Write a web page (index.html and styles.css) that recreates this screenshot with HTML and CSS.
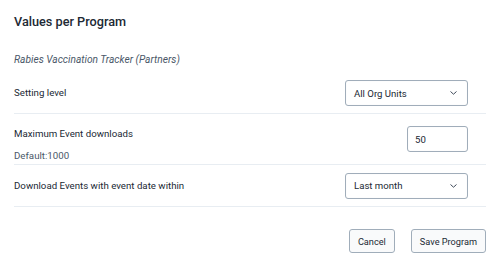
FILE: index.html
```html
<!DOCTYPE html>
<html lang="en">
<head>
    <meta charset="UTF-8">
    <meta name="viewport" content="width=device-width, initial-scale=1.0">
    <title>Values per Program</title>
    <link rel="stylesheet" href="styles.css">
</head>
<body>
    <div class="dialog">
        <h2 class="dialog-title">Values per Program</h2>
        <p class="program-name">Rabies Vaccination Tracker (Partners)</p>

        <div class="setting-row first">
            <div class="setting-label">Setting level</div>
            <div class="select wide">
                <span>All Org Units</span>
                <svg class="chevron" width="7" height="4" viewBox="0 0 7 4"><path d="M0.5 0.5 L3.5 3.2 L6.5 0.5" fill="none" stroke="#404b5a" stroke-width="1"/></svg>
            </div>
        </div>

        <div class="setting-row tall">
            <div class="setting-label with-help">
                Maximum Event downloads
                <div class="setting-help">Default:1000</div>
            </div>
            <div class="input narrow">50</div>
        </div>

        <div class="setting-row">
            <div class="setting-label">Download Events with event date within</div>
            <div class="select wide">
                <span>Last month</span>
                <svg class="chevron" width="7" height="4" viewBox="0 0 7 4"><path d="M0.5 0.5 L3.5 3.2 L6.5 0.5" fill="none" stroke="#404b5a" stroke-width="1"/></svg>
            </div>
        </div>

        <div class="buttons">
            <button type="button">Cancel</button>
            <button type="button">Save Program</button>
        </div>
    </div>
</body>
</html>
```

FILE: styles.css
```css
body {
    margin: 0;
    font-family: Roboto, "Liberation Sans", sans-serif;
    color: #212934;
    background: #fff;
}
.dialog {
    padding: 14px 14px 0 14px;
}
.dialog-title {
    font-size: 12.7px;
    font-weight: 500;
    margin: 0;
    line-height: 16px;
}
.program-name {
    font-size: 10.2px;
    font-style: italic;
    color: #4a5768;
    margin: 23px 0 6px 0;
    line-height: 14px;
}
.setting-row {
    display: flex;
    justify-content: space-between;
    align-items: center;
    min-height: 41px;
    padding-right: 18px;
    border-bottom: 1px solid #e8edf2;
    font-size: 9.7px;
}
.setting-row.first {
    min-height: 40px;
}
.setting-row.tall {
    min-height: 50px;
}
.setting-label {
    line-height: 14px;
}
.setting-label.with-help {
    padding-top: 11px;
}
.setting-help {
    color: #4a5768;
    margin-top: 8px;
}
.select, .input {
    box-sizing: border-box;
    height: 26px;
    border: 1px solid #a0adba;
    border-radius: 3px;
    box-shadow: inset 0 0 1px rgba(48, 54, 60, 0.1);
    display: flex;
    align-items: center;
    font-size: 9.6px;
}
.select {
    justify-content: space-between;
    padding: 0 10px 0 8px;
}
.input {
    padding: 0 7px;
}
.wide {
    width: 123px;
}
.narrow {
    width: 61px;
}
.buttons {
    display: flex;
    justify-content: flex-end;
    gap: 16px;
    margin-top: 22px;
}
button {
    font-family: inherit;
    font-size: 9.2px;
    color: #212934;
    height: 24px;
    padding: 0 8px;
    background: #f9fafb;
    border: 1px solid #a0adba;
    border-radius: 3px;
}
```
